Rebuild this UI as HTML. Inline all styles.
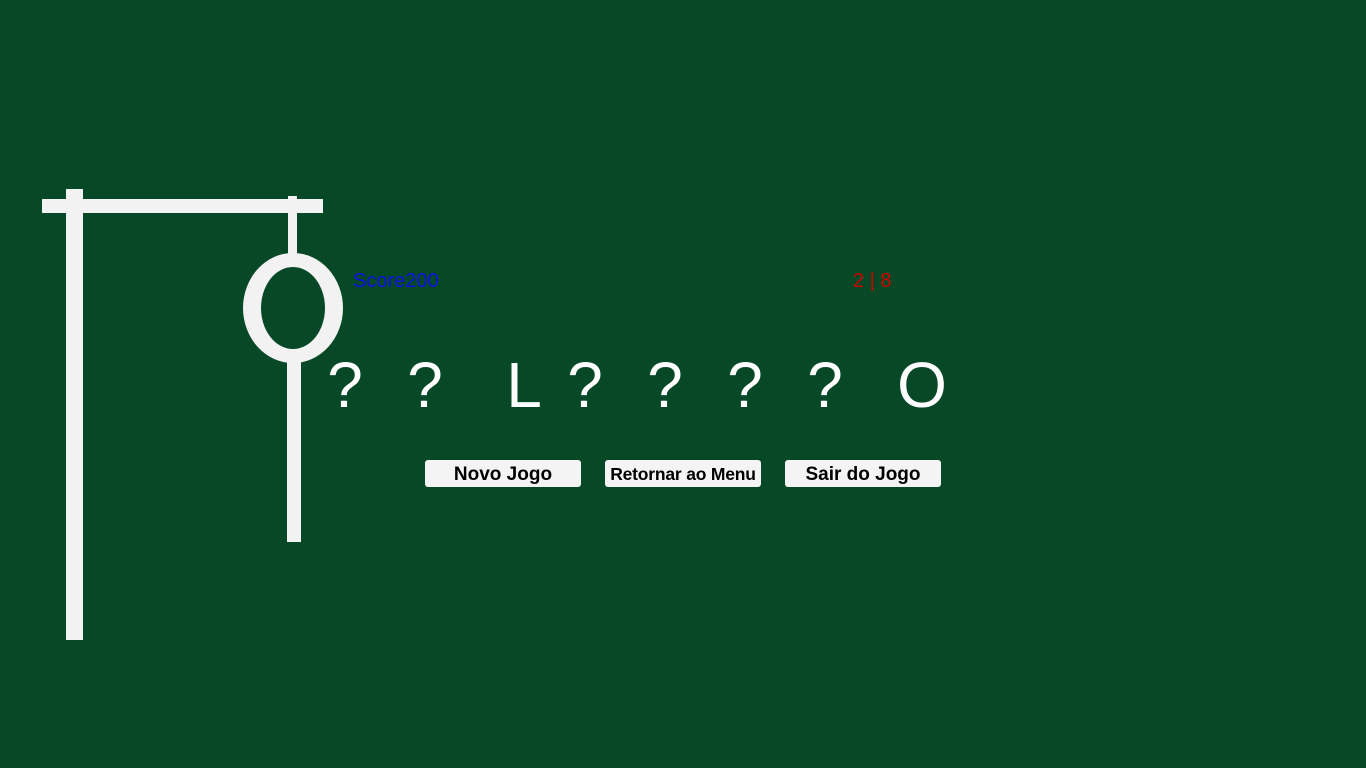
<!DOCTYPE html>
<html><head><meta charset="utf-8"><style>
html,body{margin:0;padding:0;width:1366px;height:768px;background:#074826;overflow:hidden;font-family:"Liberation Sans",sans-serif}
.r{position:absolute;background:#f2f2f2}
.c{position:absolute;color:#fff;font-size:64px;line-height:64px;top:353px;width:60px;text-align:center}
.b{position:absolute;top:460px;width:156px;height:27px;background:#f4f4f4;border-radius:3px;font-weight:bold;font-size:19px;line-height:29px;text-align:center;color:#000}
</style></head><body>
<div class="r" style="left:66px;top:189px;width:17px;height:451px"></div>
<div class="r" style="left:42px;top:199px;width:281px;height:14px"></div>
<div class="r" style="left:288px;top:196px;width:9px;height:60px"></div>
<div style="position:absolute;left:243px;top:253px;width:64px;height:82px;border:solid #f2f2f2;border-width:14px 18px;border-radius:50%"></div>
<div class="r" style="left:287px;top:360px;width:14px;height:182px"></div>
<div style="position:absolute;left:353px;top:270px;color:#1010e6;font-size:20px">Score200</div>
<div style="position:absolute;left:853px;top:270px;color:#d00000;font-size:20px">2 | 8</div>
<div class="c" style="left:315px">?</div>
<div class="c" style="left:395px">?</div>
<div class="c" style="left:494px">L</div>
<div class="c" style="left:555px">?</div>
<div class="c" style="left:635px">?</div>
<div class="c" style="left:715px">?</div>
<div class="c" style="left:795px">?</div>
<div class="c" style="left:892px">O</div>
<div class="b" style="left:425px">Novo Jogo</div>
<div class="b" style="left:605px;font-size:17.5px;letter-spacing:-0.2px">Retornar ao Menu</div>
<div class="b" style="left:785px">Sair do Jogo</div>
</body></html>
